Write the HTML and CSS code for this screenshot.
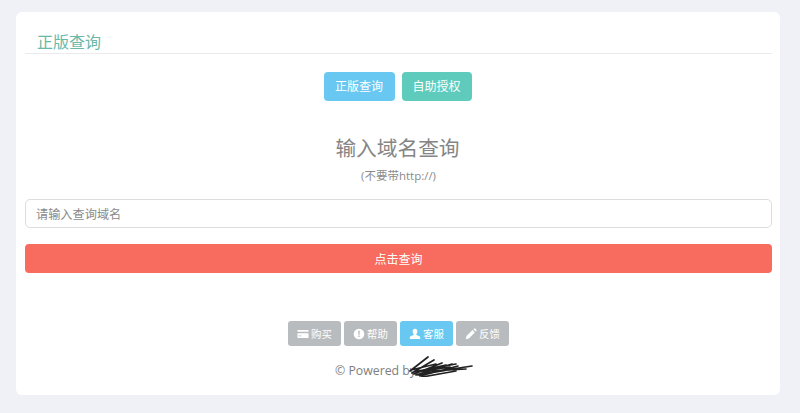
FILE: index.html
```html
<!DOCTYPE html>
<html lang="zh">
<head>
<meta charset="utf-8">
<title>正版查询</title>
<link rel="stylesheet" href="styles.css">
</head>
<body>
<main class="card">
  <h2 class="title"><span>正版查询</span></h2>
  <div class="tabs">
    <a class="tab tab-blue">正版查询</a>
    <a class="tab tab-green">自助授权</a>
  </div>
  <h1 class="heading">输入域名查询</h1>
  <p class="hint">(不要带http://)</p>
  <input class="domain" type="text" placeholder="请输入查询域名">
  <button class="submit" type="button">点击查询</button>
  <nav class="links">
    <a class="link link-first"><svg class="ico" viewBox="0 0 12 12"><path d="M0.5 2h11v8h-11z M0.5 3.800v1.500h11V3.800z M1.500 7.500v.8h3v-.8z" fill-rule="evenodd"/></svg>购买</a>
    <a class="link"><svg class="ico" viewBox="0 0 12 12"><path d="M6 .7a5.300 5.300 0 1 0 0 10.600A5.300 5.300 0 0 0 6 .7z M5.200 2.800h1.600l-.2 4H5.400z M5.300 7.600h1.400V9H5.300z" fill-rule="evenodd"/></svg>帮助</a>
    <a class="link link-on"><svg class="ico" viewBox="0 0 12 12"><path d="M6 .7c1.500 0 2.400 1.300 2.400 2.900 0 1-.4 2-1.100 2.700v.8c1.700.5 3.900 1.200 3.900 2.400V11H.8V9.500c0-1.200 2.200-1.900 3.900-2.400v-.8C4 5.600 3.600 4.600 3.600 3.600 3.600 2 4.500.7 6 .7z"/></svg>客服</a>
    <a class="link"><svg class="ico" viewBox="0 0 12 12"><path d="M.8 11.200l.7-3.100 6-6 2.400 2.400-6 6z M8.400 1.300l.8-.7c.3-.2.700-.2 1 0l1.200 1.200c.2.300.2.700 0 1l-.7.800z"/></svg>反馈</a>
  </nav>
  <footer class="foot">
    <span class="powered">© Powered by</span>
    <svg class="scribble" viewBox="0 0 65 22"><path d="M2 16L20 2M4 18L26 5M6 19L34 8M3 15L28 9M8 20L44 9M12 21L50 11M10 17L42 12M14 22L48 16M18 18L64 11M24 16L58 14M20 14L48 9M6 17L38 10M10 20L40 15" fill="none" stroke="#222" stroke-width="1.700" stroke-linecap="round"/></svg>
  </footer>
</main>
</body>
</html>
```
FILE: styles.css
```css
* { box-sizing: border-box; }
html, body { margin: 0; height: 100%; }
body {
  background: #eff1f7;
  padding: 12px 20px 18px 16px;
  font-family: "Open Sans", "Noto Sans CJK SC", sans-serif;
  overflow: hidden;
}
.card {
  background: #fff;
  border-radius: 6px;
  width: 764px;
  height: 383px;
  padding: 0 8px 0 9px;
  display: flex;
  flex-direction: column;
}
.title {
  margin: 0;
  height: 42px;
  padding: 21px 0 0 12px;
  border-bottom: 1px solid #e9ebed;
  font-size: 16px;
  line-height: 19px;
  font-weight: 400;
  color: #6ab9a8;
}
.tabs {
  display: flex;
  justify-content: center;
  gap: 7px;
  margin: 18px 2px 0 0;
}
.tab {
  height: 29px;
  border-radius: 4px;
  color: #fff;
  font-size: 12px;
  line-height: 29px;
  width: 71px;
  text-align: center;
  white-space: nowrap;
}
.tab-blue { background: #68c8f1; }
.tab-green { background: #5ecbbc; width: 70px; }
.heading {
  margin: 32px 2px 0 0;
  text-align: center;
  font-size: 20.700px;
  line-height: 30px;
  font-weight: 400;
  color: #858585;
}
.hint {
  margin: 5px 0 0;
  text-align: center;
  font-size: 11.500px;
  line-height: 16px;
  color: #8b8b8b;
}
.domain {
  display: block;
  width: 747px;
  height: 29px;
  margin-top: 15px;
  padding: 0 10px;
  border: 1px solid #dcdddf;
  border-radius: 5px;
  background: #fff;
  font: 12.200px "Noto Sans CJK SC", sans-serif;
  outline: none;
}
.domain::placeholder { color: #8a8a8a; opacity: 1; }
.submit {
  display: block;
  width: 747px;
  height: 29px;
  margin-top: 16px;
  border: 0;
  border-radius: 4px;
  background: #f76c5e;
  color: #fff;
  font: 12px/29px "Noto Sans CJK SC", sans-serif;
  padding: 0;
}
.links {
  display: flex;
  justify-content: center;
  gap: 3px;
  margin-top: 48px;
}
.link {
  display: flex;
  align-items: center;
  justify-content: center;
  gap: 2px;
  width: 53px;
  height: 25px;
  border-radius: 3px;
  background: #b9bcbf;
  color: #fff;
  font-size: 10.400px;
}
.link-on { background: #68c8f1; }
.ico { width: 12px; height: 12px; fill: #fff; flex: none; }
.foot {
  position: relative;
  margin-top: 16px;
  margin-left: 310px;
  height: 18px;
  font-size: 12.300px;
  line-height: 18px;
  color: #7e7e7e;
}
.scribble {
  position: absolute;
  left: 73px;
  top: -7px;
  width: 65px;
  height: 22px;
}
```
